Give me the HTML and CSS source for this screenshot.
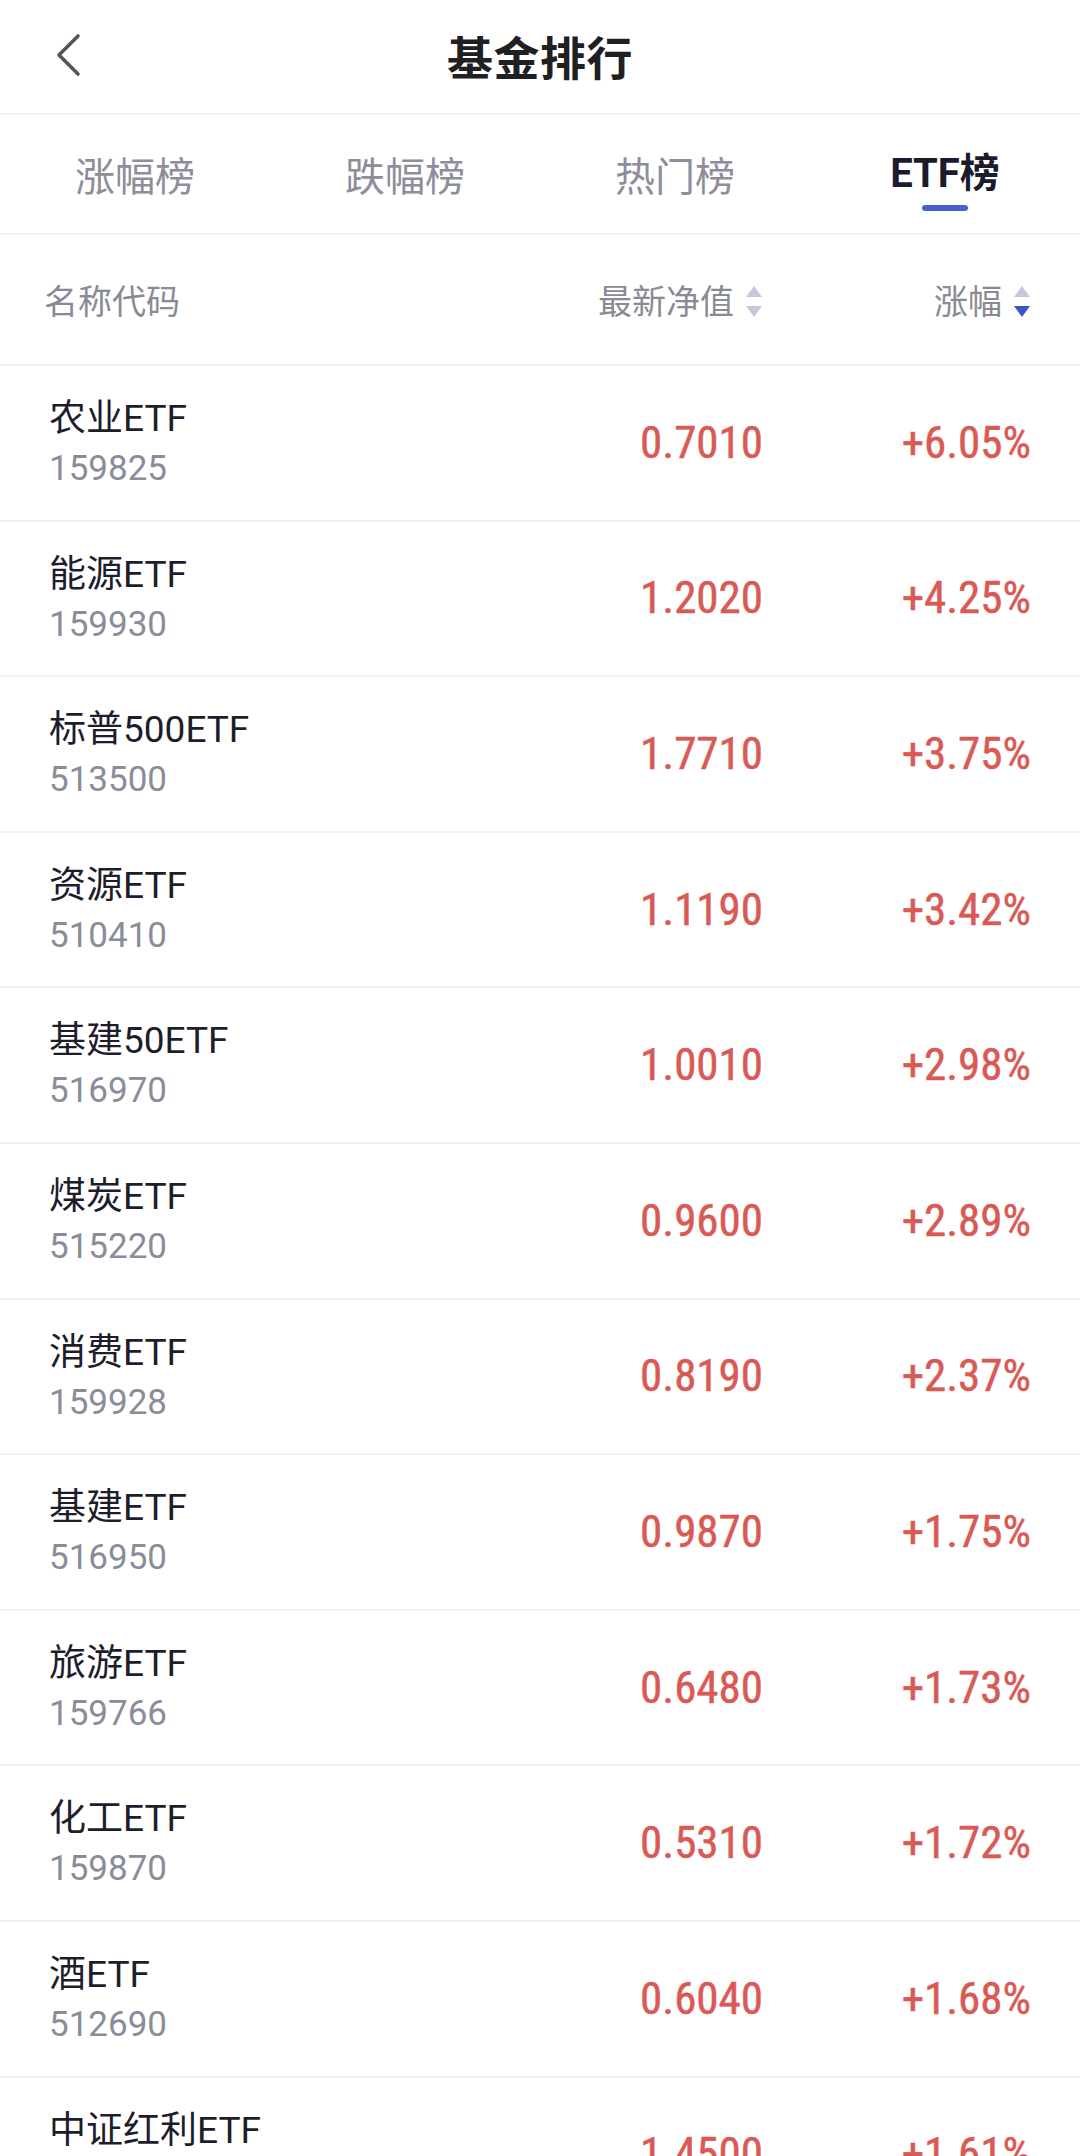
FILE: index.html
```html
<!DOCTYPE html>
<html lang="zh-CN">
<head>
<meta charset="utf-8">
<title>基金排行</title>
<link rel="stylesheet" href="styles.css">
</head>
<body>
<div class="page">
  <header class="topbar">
    <div class="back">
      <svg width="28" height="44" viewBox="0 0 28 44"><polyline points="24,3 5,22 24,41" fill="none" stroke="#555" stroke-width="3.6" stroke-linecap="round" stroke-linejoin="round"/></svg>
    </div>
    <h1 class="title">基金排行</h1>
    <div></div>
  </header>

  <nav class="tabs">
    <div class="tab"><span class="tab-text">涨幅榜</span><span class="tab-line"></span></div>
    <div class="tab"><span class="tab-text">跌幅榜</span><span class="tab-line"></span></div>
    <div class="tab"><span class="tab-text">热门榜</span><span class="tab-line"></span></div>
    <div class="tab active"><span class="tab-text">ETF榜</span><span class="tab-line"></span></div>
  </nav>

  <div class="thead">
    <div class="th th-name">名称代码</div>
    <div class="th th-num">最新净值
      <svg class="sort" width="16" height="31" viewBox="0 0 16 31"><polygon points="0,11 8,0 16,11" fill="#c6c7df"/><polygon points="0,20 16,20 8,31" fill="#c6c7df"/></svg>
    </div>
    <div class="th th-num">涨幅
      <svg class="sort" width="16" height="31" viewBox="0 0 16 31"><polygon points="0,11 8,0 16,11" fill="#c6c7df"/><polygon points="0,20 16,20 8,31" fill="#3d54c8"/></svg>
    </div>
  </div>

  <div class="list">
    <div class="row"><div class="cell-name"><div class="name">农业ETF</div><div class="code">159825</div></div><div class="val">0.7010</div><div class="val">+6.05%</div></div>
    <div class="row"><div class="cell-name"><div class="name">能源ETF</div><div class="code">159930</div></div><div class="val">1.2020</div><div class="val">+4.25%</div></div>
    <div class="row"><div class="cell-name"><div class="name">标普500ETF</div><div class="code">513500</div></div><div class="val">1.7710</div><div class="val">+3.75%</div></div>
    <div class="row"><div class="cell-name"><div class="name">资源ETF</div><div class="code">510410</div></div><div class="val">1.1190</div><div class="val">+3.42%</div></div>
    <div class="row"><div class="cell-name"><div class="name">基建50ETF</div><div class="code">516970</div></div><div class="val">1.0010</div><div class="val">+2.98%</div></div>
    <div class="row"><div class="cell-name"><div class="name">煤炭ETF</div><div class="code">515220</div></div><div class="val">0.9600</div><div class="val">+2.89%</div></div>
    <div class="row"><div class="cell-name"><div class="name">消费ETF</div><div class="code">159928</div></div><div class="val">0.8190</div><div class="val">+2.37%</div></div>
    <div class="row"><div class="cell-name"><div class="name">基建ETF</div><div class="code">516950</div></div><div class="val">0.9870</div><div class="val">+1.75%</div></div>
    <div class="row"><div class="cell-name"><div class="name">旅游ETF</div><div class="code">159766</div></div><div class="val">0.6480</div><div class="val">+1.73%</div></div>
    <div class="row"><div class="cell-name"><div class="name">化工ETF</div><div class="code">159870</div></div><div class="val">0.5310</div><div class="val">+1.72%</div></div>
    <div class="row"><div class="cell-name"><div class="name">酒ETF</div><div class="code">512690</div></div><div class="val">0.6040</div><div class="val">+1.68%</div></div>
    <div class="row"><div class="cell-name"><div class="name">中证红利ETF</div><div class="code">515080</div></div><div class="val">1.4500</div><div class="val">+1.61%</div></div>
  </div>
</div>
</body>
</html>
```

FILE: styles.css
```css
* { box-sizing: border-box; }
html, body { margin: 0; padding: 0; background: #fff; }
body {
  font-family: "Noto Sans CJK SC", "Noto Sans", sans-serif;
  width: 1080px;
  height: 2156px;
  overflow: hidden;
}
.page { width: 1080px; }

.topbar {
  height: 115px;
  border-bottom: 2px solid #f1f1f3;
  display: grid;
  grid-template-columns: 1fr auto 1fr;
  align-items: center;
  padding-bottom: 4px;
}
.back { padding-left: 54px; display: flex; align-items: center; }
.back svg { display: block; }
.title {
  margin: 0;
  font-size: 46px;
  font-weight: 700;
  color: #202022;
  line-height: 60px;
  letter-spacing: 0.5px;
}

.tabs {
  height: 120px;
  border-bottom: 2px solid #f1f1f3;
  display: grid;
  grid-template-columns: repeat(4, 1fr);
}
.tab {
  display: flex;
  flex-direction: column;
  align-items: center;
  padding-top: 34px;
}
.tab-text {
  font-size: 40px;
  line-height: 50px;
  color: #8d8d9b;
}
.tab-line {
  margin-top: 6px;
  width: 46px;
  height: 6px;
  border-radius: 3px;
  background: transparent;
}
.tab.active .tab-text {
  color: #1b1b2e;
  font-weight: 700;
  font-family: "Roboto", "Noto Sans CJK SC", sans-serif;
}
.tab.active .tab-line { background: #4a5ed3; }

.thead {
  height: 131px;
  border-bottom: 2px solid #f1f1f3;
  display: grid;
  grid-template-columns: 1fr 300px 268px;
  align-items: center;
  padding: 0 50px 0 44px;
}
.th {
  font-size: 34px;
  color: #8a8a95;
  line-height: 44px;
}
.th-num {
  display: flex;
  justify-content: flex-end;
  align-items: center;
  gap: 12px;
}
.sort { display: block; margin-top: 4px; }

.row {
  height: 155.6px;
  border-bottom: 2px solid #f1f1f3;
  display: grid;
  grid-template-columns: 1fr 300px 268px;
  align-items: center;
  padding: 0 49px 0 49px;
}
.cell-name {
  align-self: start;
  padding-top: 32px;
}
.name {
  font-family: "Roboto", "Noto Sans CJK SC", sans-serif;
  font-size: 37px;
  line-height: 42px;
  color: #1d1d2c;
}
.code {
  margin-top: 8px;
  font-family: "Roboto", sans-serif;
  font-size: 35px;
  line-height: 42px;
  color: #8b8c9a;
}
.val {
  text-align: right;
  font-family: "Liberation Sans Narrow", "Roboto Condensed", "DejaVu Sans Condensed", "Roboto", sans-serif;
  font-size: 45px;
  line-height: 50px;
  color: #d95a55;
  -webkit-text-stroke: 0.5px #d95a55;
  letter-spacing: 0;
}
```
